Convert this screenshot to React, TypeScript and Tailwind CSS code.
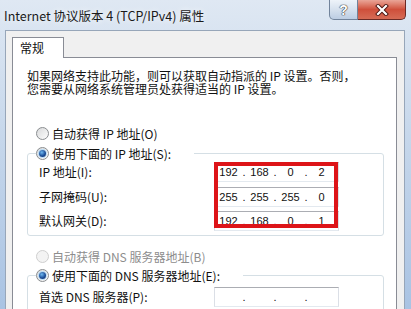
import clsx from "clsx";

const cjk = "font-['Noto_Sans_CJK_SC','Noto_Sans',sans-serif]";

function Radio({ checked = false, disabled = false }: { checked?: boolean; disabled?: boolean }) {
  return (
    <span
      className={clsx(
        "flex h-[13px] w-[13px] shrink-0 items-center justify-center rounded-full border",
        disabled
          ? "border-[#cfcfcf] bg-[#f3f3f3]"
          : "border-[#8a8d90] bg-gradient-to-br from-[#d9dadb] to-[#fdfdfd]"
      )}
    >
      {checked && (
        <span className="h-[7px] w-[7px] rounded-full bg-[radial-gradient(circle_at_40%_35%,#6fb8f0,#1c4f9a_55%,#0a2a63)] shadow-[0_0_0_1px_#b9dcf7]" />
      )}
    </span>
  );
}

function RadioRow({
  label,
  checked,
  disabled,
}: {
  label: string;
  checked?: boolean;
  disabled?: boolean;
}) {
  return (
    <div className="flex h-[13px] items-center gap-[3px]">
      <Radio checked={checked} disabled={disabled} />
      <span className={clsx("leading-[13px]", disabled ? "text-[#8d8d8d]" : "text-[#111]")}>{label}</span>
    </div>
  );
}

function IpField({ parts }: { parts: string[] }) {
  return (
    <div className="flex h-[20px] w-[125px] items-center border border-[#abadb3] border-x-[#dbdfe6] border-b-[#e3e9ef] bg-white font-['Liberation_Sans',sans-serif] text-[11px] text-[#111]">
      {parts.map((p, i) => (
        <div key={i} className="flex items-center">
          <span className="w-[27px] text-center">{p}</span>
          {i < 3 && <span className="w-[4px] text-center">.</span>}
        </div>
      ))}
    </div>
  );
}

export default function App() {
  return (
    <div
      className={clsx(
        "flex h-[309px] w-[411px] flex-col overflow-hidden bg-gradient-to-b from-[#dfe8f3] via-[#c3d5ea] to-[#a9c3e3] text-[12px]",
        cjk
      )}
    >
      {/* title bar */}
      <div className="flex h-[30px] shrink-0 items-start justify-between">
        <span className="pl-[4px] pt-[8px] text-[12.5px] leading-[16px] text-[#1a1a1a] [text-shadow:0_0_6px_#ffffff]">
          Internet 协议版本 4 (TCP/IPv4) 属性
        </span>
        <div className="mr-[5px] flex">
          <div className="flex h-[20px] w-[29px] items-center justify-center rounded-bl-[5px] border border-t-0 border-[#71839b] bg-gradient-to-b from-[#eef3f9] via-[#d6e1ee] to-[#bccde3]">
            <span className="font-['Liberation_Sans',sans-serif] text-[14px] font-bold leading-none text-white [text-shadow:0_0_1px_#333,0_0_1px_#333,0_0_1px_#333]">
              ?
            </span>
          </div>
          <div className="flex h-[20px] w-[48px] items-center justify-center rounded-br-[5px] border border-l-0 border-t-0 border-[#6b2a25] bg-gradient-to-b from-[#e9a597] via-[#cf4f3b] to-[#d66b55]">
            <svg width="16" height="12" viewBox="0 0 16 12">
              <path d="M4 2 L12 10 M12 2 L4 10" stroke="#4a1410" strokeWidth="4" strokeLinecap="square" />
              <path d="M4 2 L12 10 M12 2 L4 10" stroke="#ffffff" strokeWidth="2.2" strokeLinecap="square" />
            </svg>
          </div>
        </div>
      </div>

      {/* client area */}
      <div className="ml-[5px] flex w-[400px] flex-1 flex-col border border-[#97a6b9] bg-[#f0f0f0] pl-[6px] pr-[7px] pt-[6px]">
        <div className="relative z-10 -mb-px flex h-[21px] w-[52px] items-center border border-b-0 border-[#898c95] bg-white pl-[7px] text-[#111]">
          常规
        </div>
        <div className="flex flex-1 flex-col border border-[#898c95] bg-white pl-[14px] pt-[11px] text-[#111]">
          <p className="leading-[13px]">
            如果网络支持此功能，则可以获取自动指派的 IP 设置。否则，
            <br />
            您需要从网络系统管理员处获得适当的 IP 设置。
          </p>

          <div className="ml-[9px] mt-[32px]">
            <RadioRow label="自动获得 IP 地址(O)" />
          </div>

          <fieldset className="mt-[7px] w-[357px] rounded-[3px] border border-[#d5dfe5] pb-[4px] pl-[11px] pt-[2px]">
            <legend className="-ml-[3px] bg-white pr-[23px]">
              <RadioRow label="使用下面的 IP 地址(S):" checked />
            </legend>
            <div className="flex">
              <div className="flex w-[175px] flex-col">
                <div className="flex h-[20px] items-center">IP 地址(I):</div>
                <div className="mt-[5px] flex h-[20px] items-center">子网掩码(U):</div>
                <div className="mt-[4px] flex h-[20px] items-center">默认网关(D):</div>
              </div>
              <div className="relative flex flex-col">
                <IpField parts={["192", "168", "0", "2"]} />
                <div className="mt-[5px]">
                  <IpField parts={["255", "255", "255", "0"]} />
                </div>
                <div className="mt-[4px]">
                  <IpField parts={["192", "168", "0", "1"]} />
                </div>
                <div className="absolute left-0 top-0 h-[66px] w-[124px] border-[4px] border-[#dd1418]" />
              </div>
            </div>
          </fieldset>

          <div className="ml-[9px] mt-[14px]">
            <RadioRow label="自动获得 DNS 服务器地址(B)" disabled />
          </div>

          <fieldset className="mt-[6px] w-[357px] rounded-[3px] border border-[#d5dfe5] pb-[4px] pl-[11px] pt-[5px]">
            <legend className="-ml-[3px] bg-white pr-[23px]">
              <RadioRow label="使用下面的 DNS 服务器地址(E):" checked />
            </legend>
            <div className="flex">
              <div className="flex h-[20px] w-[175px] items-center">首选 DNS 服务器(P):</div>
              <IpField parts={["", "", "", ""]} />
            </div>
          </fieldset>
        </div>
      </div>
    </div>
  );
}
